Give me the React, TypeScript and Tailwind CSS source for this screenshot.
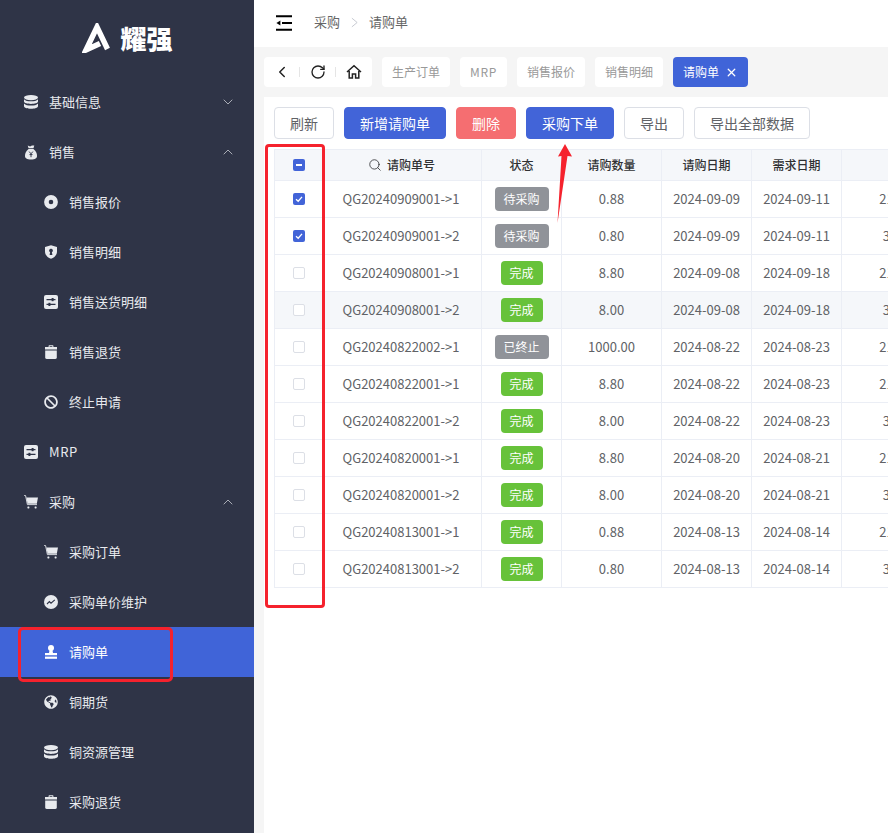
import { ChevronDown, ChevronLeft, ChevronUp, RotateCw, Search, X } from "lucide-react";
import { FaBan, FaGlobeAmericas } from "react-icons/fa";
import type { ReactNode } from "react";

const font = { fontFamily: '"Noto Sans CJK SC", "Noto Sans", sans-serif' };

const MoneyBag = () => (
  <svg viewBox="0 0 14 16" className="h-[15px] w-[14px]" fill="currentColor">
    <path d="M3.5 0.6 L6 1.6 L8 0.6 L10.5 0.4 L9.6 3.4 L4.4 3.4 Z" />
    <path d="M4.4 4.2 H9.6 C12 6 13.4 8.6 13.4 11.4 C13.4 14.2 11.6 15.4 7 15.4 C2.4 15.4 0.6 14.2 0.6 11.4 C0.6 8.6 2 6 4.4 4.2 Z" />
    <path d="M5 7 L7 9.4 L9 7 M7 9.4 V13 M5.4 10.2 H8.6" stroke="#2f3447" strokeWidth="1" fill="none" />
  </svg>
);

const Disc = () => (
  <svg viewBox="0 0 14 14" className="h-[14px] w-[14px]">
    <circle cx="7" cy="7" r="4.6" fill="none" stroke="currentColor" strokeWidth="4.6" />
  </svg>
);

const Shield = () => (
  <svg viewBox="0 0 14 14" className="h-[14px] w-[14px]" fill="currentColor">
    <path
      fillRule="evenodd"
      d="M7 0.2 L13 2 V6.4 C13 10 10.4 12.6 7 13.8 C3.6 12.6 1 10 1 6.4 V2 Z M7 3.8 A1.8 1.8 0 0 0 6.1 7.2 L5.6 10 H8.4 L7.9 7.2 A1.8 1.8 0 0 0 7 3.8 Z"
    />
  </svg>
);

const Sliders = () => (
  <svg viewBox="0 0 14 14" className="h-[14px] w-[14px]">
    <rect width="14" height="14" rx="2" fill="currentColor" />
    <path d="M2.5 4.6 H11.5 M2.5 9.4 H11.5" stroke="#2f3447" strokeWidth="1.1" />
    <rect x="7.6" y="3" width="2" height="3.2" fill="#2f3447" />
    <rect x="4.4" y="7.8" width="2" height="3.2" fill="#2f3447" />
  </svg>
);

const Basket = () => (
  <svg viewBox="0 0 14 14" className="h-[14px] w-[14px]" fill="currentColor">
    <path d="M4.6 2 V0.8 C4.6 0.4 4.9 0.2 5.2 0.2 H8.8 C9.1 0.2 9.4 0.4 9.4 0.8 V2 H13 V4.4 H1 V2 Z M5.6 2 H8.4 V1.2 H5.6 Z" fillRule="evenodd" />
    <path d="M1.2 5.4 H12.8 V12.8 C12.8 13.4 12.2 14 11.4 14 H2.6 C1.8 14 1.2 13.4 1.2 12.8 Z" />
  </svg>
);

const Trend = () => (
  <svg viewBox="0 0 14 14" className="h-[14px] w-[14px]">
    <circle cx="7" cy="7" r="7" fill="currentColor" />
    <path d="M3 9 L5.4 6.6 L7 8.2 L10.8 4.8" stroke="#2f3447" strokeWidth="1.1" fill="none" />
  </svg>
);

const Database = () => (
  <svg viewBox="0 0 14 14" className="h-[14px] w-[14px]" fill="currentColor">
    <ellipse cx="7" cy="2.6" rx="7" ry="2.6" />
    <path d="M0 4.2 C1.4 5.8 4 6.3 7 6.3 C10 6.3 12.6 5.8 14 4.2 V6.6 C14 8.1 10.8 9 7 9 C3.2 9 0 8.1 0 6.6 Z" />
    <path d="M0 8.4 C1.4 10 4 10.5 7 10.5 C10 10.5 12.6 10 14 8.4 V11 C14 12.8 10.8 13.8 7 13.8 C3.2 13.8 0 12.8 0 11 Z" />
  </svg>
);

const Cart = () => (
  <svg viewBox="0 0 14 14" className="h-[14px] w-[14px]" fill="currentColor">
    <path d="M0 0.2 L1.6 0.6 L3.4 9.6 H13" fill="none" stroke="currentColor" strokeWidth="0.9" />
    <path d="M2.4 2.6 H14 L12.8 8.8 H3.6 Z" />
    <rect x="3.4" y="11.4" width="2" height="2" rx="0.6" />
    <rect x="10.6" y="11.4" width="2" height="2" rx="0.6" />
  </svg>
);

const Stamp = () => (
  <svg viewBox="0 0 14 14" className="h-[14px] w-[14px]" fill="currentColor">
    <circle cx="7" cy="3" r="3" />
    <path d="M5.6 5 H8.4 L9 8 H13 V10.2 H1 V8 H5 Z" />
    <rect x="1" y="11.6" width="12" height="2.2" />
  </svg>
);

const i14 = "h-[14px] w-[14px]";

type MenuItem = {
  label: string;
  icon: ReactNode;
  sub?: boolean;
  arrow?: "up" | "down";
  active?: boolean;
};

const menu: MenuItem[] = [
  { label: "基础信息", icon: <Database />, arrow: "down" },
  { label: "销售", icon: <MoneyBag />, arrow: "up" },
  { label: "销售报价", icon: <Disc />, sub: true },
  { label: "销售明细", icon: <Shield />, sub: true },
  { label: "销售送货明细", icon: <Sliders />, sub: true },
  { label: "销售退货", icon: <Basket />, sub: true },
  { label: "终止申请", icon: <FaBan className={i14} />, sub: true },
  { label: "MRP", icon: <Sliders /> },
  { label: "采购", icon: <Cart />, arrow: "up" },
  { label: "采购订单", icon: <Cart />, sub: true },
  { label: "采购单价维护", icon: <Trend />, sub: true },
  { label: "请购单", icon: <Stamp />, sub: true, active: true },
  { label: "铜期货", icon: <FaGlobeAmericas className={i14} />, sub: true },
  { label: "铜资源管理", icon: <Database />, sub: true },
  { label: "采购退货", icon: <Basket />, sub: true },
];

const Sidebar = () => (
  <aside className="relative w-[254px] shrink-0 bg-[#2f3447] text-[#e8eaee]">
    <div className="flex h-[77px] items-center justify-center gap-[8px] pb-[2px] pl-[1px]">
      <svg viewBox="0 0 30 30" className="h-[30px] w-[30px]">
        <path
          d="M25.5 26 L15 4 L4 27 L18 20.5"
          fill="none"
          stroke="#fff"
          strokeWidth="5.4"
          strokeLinejoin="miter"
        />
      </svg>
      <span className="text-[26px] leading-none font-black text-white">耀强</span>
    </div>
    {menu.map((item) => (
      <div
        key={item.label}
        className={`flex h-[50px] items-center pr-[18px] text-[13px] ${
          item.sub ? "pl-[44px]" : "pl-[24px]"
        } ${item.active ? "bg-[#4064d8] text-white" : ""}`}
      >
        <span className="flex w-[25px] shrink-0 items-center">{item.icon}</span>
        <span className={item.label === "MRP" ? "tracking-[0.6px]" : ""}>{item.label}</span>
        {item.arrow === "down" && <ChevronDown size={16} strokeWidth={1} className="ml-auto" />}
        {item.arrow === "up" && <ChevronUp size={16} strokeWidth={1} className="ml-auto" />}
      </div>
    ))}
    <div className="absolute top-[627px] left-[18px] h-[55px] w-[155px] rounded-[5px] border-[3px] border-[#f5222d]" />
  </aside>
);

const Header = () => (
  <header className="flex h-[47px] items-center bg-white pl-[22px] text-[13px] text-[#666]">
    <svg viewBox="0 0 16 16" className="mr-[22px] mb-[1px] h-[16px] w-[16px] text-black">
      <path d="M0 1.2 H16 M6 8 H16 M0 14.8 H16" stroke="currentColor" strokeWidth="2" />
      <path d="M0.4 8 L4.4 5.4 V10.6 Z" fill="currentColor" />
    </svg>
    <div className="mb-[3px] flex items-center">
      <span>采购</span>
      <svg viewBox="0 0 8 12" className="mx-[11px] h-[11px] w-[7px] text-[#c0c4cc]">
        <path d="M1 1 L7 6 L1 11" fill="none" stroke="currentColor" strokeWidth="1" />
      </svg>
      <span>请购单</span>
    </div>
  </header>
);

const tabs = ["生产订单", "MRP", "销售报价", "销售明细"];

const TabBar = () => (
  <div className="flex h-[50px] items-center gap-[10px] pl-[10px]">
    <div className="flex h-[30px] w-[108px] items-center rounded-[4px] bg-white pl-[9px] text-[#222]">
      <ChevronLeft size={18} strokeWidth={2} />
      <span className="ml-[8px] h-[10px] w-px bg-[#e5e5e5]" />
      <RotateCw size={16} strokeWidth={2} className="ml-[10px]" />
      <span className="ml-[9px] h-[10px] w-px bg-[#e5e5e5]" />
      <svg viewBox="0 0 16 16" className="ml-[10px] h-[16px] w-[16px]">
        <path d="M1 8 L8 1.8 L15 8 M3.2 7 V14 H6.4 V10 H9.6 V14 H12.8 V7" fill="none" stroke="currentColor" strokeWidth="1.5" />
      </svg>
    </div>
    {tabs.map((t) => (
      <div
        key={t}
        className={`flex h-[30px] items-center rounded-[4px] bg-white px-[10px] text-[12px] text-[#999] ${
          t === "MRP" ? "tracking-[0.7px]" : ""
        }`}
      >
        {t}
      </div>
    ))}
    <div className="flex h-[30px] items-center gap-[6px] rounded-[4px] bg-[#4064d8] px-[10px] text-[12px] text-white">
      请购单
      <X size={13} strokeWidth={2.4} />
    </div>
  </div>
);

const Btn = (props: { kind?: "primary" | "danger"; children: ReactNode }) => {
  const cls =
    props.kind === "primary"
      ? "border-[#4264d8] bg-[#4264d8] text-white"
      : props.kind === "danger"
        ? "border-[#f56e71] bg-[#f56e71] text-white"
        : "border-[#dcdfe6] bg-white text-[#606266]";
  return (
    <div className={`flex h-[32px] items-center rounded-[4px] border px-[15px] text-[14px] ${cls}`}>
      {props.children}
    </div>
  );
};

const Check = (props: { state?: "on" | "some" }) => {
  if (props.state === "on") {
    return (
      <span className="mx-auto flex h-[12px] w-[12px] items-center justify-center rounded-[2px] bg-[#4264d8]">
        <svg viewBox="0 0 12 12" className="h-[12px] w-[12px]">
          <path d="M3 6.2 L5.2 8.2 L9 3.8" fill="none" stroke="#fff" strokeWidth="1.3" />
        </svg>
      </span>
    );
  }
  if (props.state === "some") {
    return (
      <span className="mx-auto flex h-[12px] w-[12px] items-center justify-center rounded-[2px] bg-[#4264d8]">
        <span className="h-[2px] w-[6px] bg-white" />
      </span>
    );
  }
  return <span className="mx-auto block h-[12px] w-[12px] rounded-[2px] border border-[#dcdfe6] bg-white" />;
};

type Row = {
  no: string;
  status: string;
  qty: string;
  date: string;
  need: string;
  last: string;
  checked?: boolean;
  hover?: boolean;
};

const rows: Row[] = [
  { no: "QG20240909001->1", status: "待采购", qty: "0.88", date: "2024-09-09", need: "2024-09-11", last: "21.00", checked: true },
  { no: "QG20240909001->2", status: "待采购", qty: "0.80", date: "2024-09-09", need: "2024-09-11", last: "3.00", checked: true },
  { no: "QG20240908001->1", status: "完成", qty: "8.80", date: "2024-09-08", need: "2024-09-18", last: "21.00" },
  { no: "QG20240908001->2", status: "完成", qty: "8.00", date: "2024-09-08", need: "2024-09-18", last: "3.00", hover: true },
  { no: "QG20240822002->1", status: "已终止", qty: "1000.00", date: "2024-08-22", need: "2024-08-23", last: "21.00" },
  { no: "QG20240822001->1", status: "完成", qty: "8.80", date: "2024-08-22", need: "2024-08-23", last: "21.00" },
  { no: "QG20240822001->2", status: "完成", qty: "8.00", date: "2024-08-22", need: "2024-08-23", last: "3.00" },
  { no: "QG20240820001->1", status: "完成", qty: "8.80", date: "2024-08-20", need: "2024-08-21", last: "21.00" },
  { no: "QG20240820001->2", status: "完成", qty: "8.00", date: "2024-08-20", need: "2024-08-21", last: "3.00" },
  { no: "QG20240813001->1", status: "完成", qty: "0.88", date: "2024-08-13", need: "2024-08-14", last: "21.00" },
  { no: "QG20240813001->2", status: "完成", qty: "0.80", date: "2024-08-13", need: "2024-08-14", last: "3.00" },
];

const th = "border border-[#ebeef5] bg-[#f5f7fa] text-[12px] font-medium text-[#303133]";
const td = "border border-[#ebeef5] text-center";

const Table = () => (
  <div className="mt-[10px] overflow-hidden">
    <table className="w-[675px] table-fixed border-collapse text-[13px] text-[#606266]">
      <colgroup>
        <col className="w-[50px]" />
        <col className="w-[157px]" />
        <col className="w-[80px]" />
        <col className="w-[100px]" />
        <col className="w-[90px]" />
        <col className="w-[90px]" />
        <col className="w-[108px]" />
      </colgroup>
      <thead>
        <tr className="h-[31px]">
          <th className={`${th} pr-[2px]`}>
            <Check state="some" />
          </th>
          <th className={`${th} pr-[3px]`}>
            <span className="flex items-center justify-center gap-[5px]">
              <Search size={14} strokeWidth={1.4} />
              请购单号
            </span>
          </th>
          <th className={th}>状态</th>
          <th className={th}>请购数量</th>
          <th className={th}>请购日期</th>
          <th className={th}>需求日期</th>
          <th className={th}></th>
        </tr>
      </thead>
      <tbody>
        {rows.map((r) => (
          <tr key={r.no} className={`h-[37px] ${r.hover ? "bg-[#f5f7fa]" : "bg-white"}`}>
            <td className={`${td} pr-[2px]`}>
              <Check state={r.checked ? "on" : undefined} />
            </td>
            <td className={`${td} pr-[4px]`}>{r.no}</td>
            <td className={td}>
              <span
                className={`mx-auto flex h-[24px] items-center justify-center rounded-[4px] text-[12px] text-white ${
                  r.status === "完成" ? "w-[42px] bg-[#67c23a]" : "w-[54px] bg-[#909399]"
                }`}
              >
                {r.status}
              </span>
            </td>
            <td className={td}>{r.qty}</td>
            <td className={td}>{r.date}</td>
            <td className={td}>{r.need}</td>
            <td className={td}>{r.last}</td>
          </tr>
        ))}
      </tbody>
    </table>
  </div>
);

export default function App() {
  return (
    <div className="relative flex h-[833px] w-[888px] overflow-hidden" style={font}>
      <Sidebar />
      <main className="flex min-w-0 flex-1 flex-col bg-[#f5f5f5]">
        <Header />
        <TabBar />
        <section className="ml-[10px] flex-1 bg-white pt-[10px] pl-[10px]">
          <div className="flex gap-[10px]">
            <Btn>刷新</Btn>
            <Btn kind="primary">新增请购单</Btn>
            <Btn kind="danger">删除</Btn>
            <Btn kind="primary">采购下单</Btn>
            <Btn>导出</Btn>
            <Btn>导出全部数据</Btn>
          </div>
          <Table />
        </section>
      </main>
      {/* red markup drawn on top of the screenshot */}
      <div className="absolute top-[144px] left-[265px] h-[464px] w-[60px] rounded-[4px] border-[3px] border-[#f5222d]" />
      <svg viewBox="0 0 20 82" className="absolute top-[143px] left-[555px] h-[82px] w-[20px]">
        <path d="M10 1 L17 13.5 L12.5 13 L2.5 80 L6.5 13 L3 13.5 Z" fill="#f5222d" />
      </svg>
    </div>
  );
}
